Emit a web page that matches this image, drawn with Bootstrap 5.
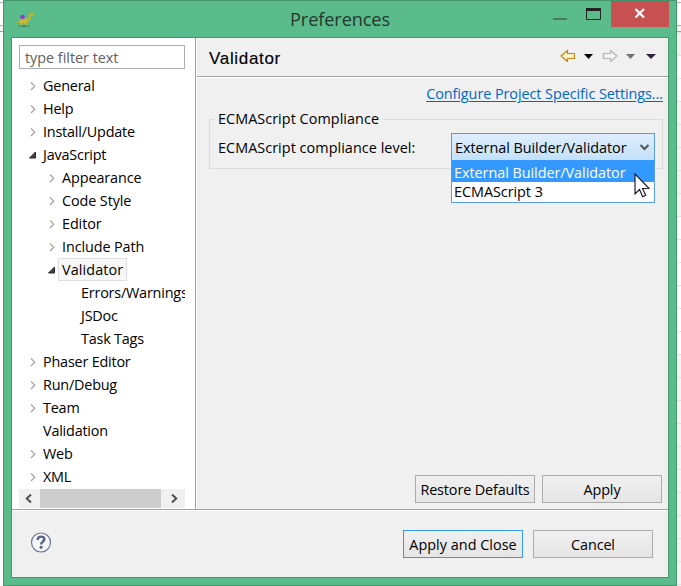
<!DOCTYPE html>
<html lang="en">
<head>
<meta charset="utf-8">
<title>Preferences</title>
<link rel="stylesheet" href="https://cdn.jsdelivr.net/npm/bootstrap@5.3.0/dist/css/bootstrap.min.css">
<style>
body{width:681px;height:586px;overflow:hidden;padding:0 4px 0 3px;color:#000;
 font:14.4px/23px "Open Sans","Noto Sans",sans-serif;letter-spacing:-.2px;
 background:linear-gradient(#fff 2px,#b0b0b4 2px 3px,#fff 3px 25px,#b0b0b4 25px 26px,#f4f4f4 26px 31px,#a0a0a0 31px 32px,transparent 32px),
 linear-gradient(#fff,#fff) 0 0/3px 100% no-repeat,
 repeating-linear-gradient(transparent 0 9px,#dfdfdf 9px 10px,transparent 10px 23px),
 linear-gradient(#f2f2f2 55px,#fff 55px 101px,#f5f5f5 101px 216px,#fff 216px 354px,#f5f5f5 354px)}
svg{display:block;flex:none}
.dialog-window{height:586px;background:#5bbc8b;border:1px solid #45966d;padding:0 7px 7px}
.titlebar{height:36px}
.app-icon{margin:9px 0 0 2px;width:22px}
.win-title{font-size:18.2px;line-height:36px;letter-spacing:-.12px;color:#23382e;padding-left:255px}
.win-close{width:58px;height:26px;background:#c75050;margin-right:0}
.client{height:541px;background:#f0f0f0;border:1px solid #45966d}
.upper{height:472px;border-bottom:1px solid #a0a0a0}
.sidebar{width:184px;background:#fff;border-right:1px solid #a0a0a0;padding:7px 10px 0 7px}
.filter-box{width:166px;height:24px;border:1px solid #abadb3;padding:0 5px;color:#606060;line-height:24px;letter-spacing:-.02px;margin-bottom:5px}
.tree{height:415px;width:166px;overflow:hidden}
.node{height:23px;padding-left:9px;white-space:nowrap}
.lvl1{padding-left:28px}.lvl2{padding-left:47px}
.twisty{width:11px;height:23px;flex:none}
.node-label{padding:0 3px;height:23px;line-height:21px;border:1px solid transparent}
.lvl1 .node-label{letter-spacing:-.1px}
.picked{background:#f7f7f7;border-color:#dedede}
.lvl1 .picked{letter-spacing:.1px}
.scroller{width:166px;height:19px;background:#f0f0f0}
.thumb{width:121px;background:#cdcdcd}
.page{border-left:1px solid #fff;min-width:0}
.page-head{height:39px;border-bottom:1px solid #a0a0a0;box-shadow:0 1px #fff;padding-left:12px}
.page-title{font:17px/38px "Liberation Sans",sans-serif;letter-spacing:.68px;-webkit-text-stroke:.15px #000;padding-top:2px;height:38px}
.settings-link{color:#06c;text-decoration:underline;text-underline-offset:2px;line-height:23px;letter-spacing:-.06px;margin:5px 5px 0 0}
.settings-group{margin:4px 5px 0 12px;height:60px;border:1px solid #dcdcdc;padding:0 7px 0 8px;letter-spacing:.05px}
.settings-group legend{float:none;width:auto;font-size:inherit;line-height:20px;margin:0 0 0 -3px;padding:0 3px;background:#f0f0f0}
.level-label{padding-top:7px}
.combo{width:204px;height:28px;border:1px solid #569de5;background:linear-gradient(#dfeefc,#c4e0fa);padding:0 4px 0 3px;position:relative;margin-top:4px;letter-spacing:-.04px}
.combo-list{position:absolute;left:-1px;top:26px;width:204px;height:43px;background:#fff;border:1px solid #569de5;border-top-width:2px;border-top-color:#39f;line-height:20px;z-index:2}
.combo-list div{padding-left:2px;height:20px}
.combo-list .hot{background:#39f;color:#fff;height:20px;line-height:22px}
.pointer{position:absolute;left:182px;top:11px}
.btn.dlg{width:120px;height:28px;padding:0;border:1px solid #acacac;border-radius:0;background:linear-gradient(#f0f0f0,#e5e5e5);color:#000;font-size:inherit;line-height:27px;letter-spacing:-.12px}
.btn.dlg.main{border-color:#39f;letter-spacing:.03px}
.footer-bar{height:67px;border-top:1px solid #fff;padding:0 15px 0 18px}
.page-actions{gap:7px;padding:0 6px 6px 0}
.bottom-actions{gap:10px}
</style>
<script src="https://cdn.jsdelivr.net/npm/bootstrap@5.3.0/dist/js/bootstrap.bundle.min.js"></script>
</head>
<body>
<svg width="0" height="0" class="position-absolute"><defs>
<symbol id="closed" viewBox="0 0 11 23"><path d="M3 8.500l3.700 3.700L3 16" fill="none" stroke="#a0a0a0" stroke-width="1.200"/></symbol>
<symbol id="open" viewBox="0 0 11 23"><path d="M7.500 9v6h-6z" fill="#404040" stroke="#262626"/></symbol>
</defs></svg>
<div class="dialog-window">
 <div class="titlebar d-flex align-items-start">
  <svg class="app-icon" width="22" height="18" viewBox="0 0 22 18"><ellipse cx="11" cy="16" rx="6" ry="1" fill="#3f9068"/><path d="M2.500 8v3l3 1.500 1.500-3 3-2 4 1.500 2-1.500V3.800l2-1.300 3 1v2.200l-3-.5-.5 4-3 3.500v2.600h-2v-2H9v2H7v-2.500C3.500 13.500 1.500 11 2.500 8z" fill="#c6b62f" stroke="#a5ad35" stroke-width=".5"/><path d="M7 12h6" stroke="#d9c640"/><circle cx="9.500" cy="7" r="2.300" fill="#8740cf"/></svg>
  <div class="win-title">Preferences</div>
  <div class="ms-auto d-flex">
   <svg width="59" height="26" viewBox="0 0 59 26"><path d="M1 17h14v2H1z" fill="#47795f"/><path d="M34.500 8v10.500h14V8z" fill="none" stroke="#222"/><path d="M34 7h15v3H34z" fill="#222"/></svg>
   <div class="win-close d-flex justify-content-center"><svg width="12" height="26" viewBox="0 0 12 26"><path d="M1.500 8l8.500 8.500M10 8l-8.500 8.500" stroke="#fff" stroke-width="2.200"/></svg></div>
  </div>
 </div>
 <div class="client d-flex flex-column">
  <div class="upper d-flex">
   <aside class="sidebar flex-shrink-0">
    <div class="filter-box">type filter text</div>
    <div class="tree">
     <div class="node d-flex"><svg class="twisty"><use href="#closed"/></svg><div class="node-label">General</div></div>
     <div class="node d-flex"><svg class="twisty"><use href="#closed"/></svg><div class="node-label">Help</div></div>
     <div class="node d-flex"><svg class="twisty"><use href="#closed"/></svg><div class="node-label">Install/Update</div></div>
     <div class="node d-flex"><svg class="twisty"><use href="#open"/></svg><div class="node-label">JavaScript</div></div>
     <div class="node lvl1 d-flex"><svg class="twisty"><use href="#closed"/></svg><div class="node-label">Appearance</div></div>
     <div class="node lvl1 d-flex"><svg class="twisty"><use href="#closed"/></svg><div class="node-label">Code Style</div></div>
     <div class="node lvl1 d-flex"><svg class="twisty"><use href="#closed"/></svg><div class="node-label">Editor</div></div>
     <div class="node lvl1 d-flex"><svg class="twisty"><use href="#closed"/></svg><div class="node-label">Include Path</div></div>
     <div class="node lvl1 d-flex"><svg class="twisty"><use href="#open"/></svg><div class="node-label picked">Validator</div></div>
     <div class="node lvl2 d-flex"><div class="twisty"></div><div class="node-label">Errors/Warnings</div></div>
     <div class="node lvl2 d-flex"><div class="twisty"></div><div class="node-label">JSDoc</div></div>
     <div class="node lvl2 d-flex"><div class="twisty"></div><div class="node-label">Task Tags</div></div>
     <div class="node d-flex"><svg class="twisty"><use href="#closed"/></svg><div class="node-label">Phaser Editor</div></div>
     <div class="node d-flex"><svg class="twisty"><use href="#closed"/></svg><div class="node-label">Run/Debug</div></div>
     <div class="node d-flex"><svg class="twisty"><use href="#closed"/></svg><div class="node-label">Team</div></div>
     <div class="node d-flex"><div class="twisty"></div><div class="node-label">Validation</div></div>
     <div class="node d-flex"><svg class="twisty"><use href="#closed"/></svg><div class="node-label">Web</div></div>
     <div class="node d-flex"><svg class="twisty"><use href="#closed"/></svg><div class="node-label">XML</div></div>
    </div>
    <div class="scroller d-flex">
     <svg width="21" height="19"><path d="M12 5.500l-4.200 4 4.200 4" fill="none" stroke="#505050" stroke-width="2"/></svg>
     <div class="thumb"></div>
     <svg width="24" height="19"><path d="M11 5.500l4.200 4-4.200 4" fill="none" stroke="#505050" stroke-width="2"/></svg>
    </div>
   </aside>
   <main class="page flex-grow-1 d-flex flex-column">
    <div class="page-head d-flex justify-content-between">
     <div class="page-title">Validator</div>
     <svg class="me-1" width="104" height="38" viewBox="0 0 104 38">
      <path d="M1 18l6.500-5.500v3H14.500v5H7.500v3z" fill="#fff2c2" stroke="#bd851c" stroke-width="1.200" stroke-linejoin="round"/>
      <path d="M24 16h9l-4.500 5z" fill="#000"/>
      <path d="M57 18l-6.500-5.500v3H43.500v5h7v3z" fill="#f4f4f4" stroke="#b4b4b4" stroke-width="1.200" stroke-linejoin="round"/>
      <path d="M66 16h9l-4.500 5z" fill="#707070"/><path d="M86 16h10l-5 5z" fill="#302040"/>
     </svg>
    </div>
    <a class="settings-link align-self-end" href="#">Configure Project Specific Settings...</a>
    <fieldset class="settings-group">
     <legend>ECMAScript Compliance</legend>
     <div class="d-flex justify-content-between">
      <span class="level-label">ECMAScript compliance level:</span>
      <div class="combo d-flex align-items-center justify-content-between">
       <span>External Builder/Validator</span>
       <svg width="11" height="9"><path d="M1.500 2l4 4 4-4" fill="none" stroke="#555" stroke-width="2"/></svg>
       <div class="combo-list"><div class="hot">External Builder/Validator</div><div>ECMAScript 3</div>
        <svg class="pointer" width="17" height="25" viewBox="0 0 17 25"><path d="M1 1v20l4.500-4.500 3.200 7.200 3-1.400-3.200-6.800 6.500-.2z" fill="#fff" stroke="#101020" stroke-width="1.100"/></svg>
       </div>
      </div>
     </div>
    </fieldset>
    <div class="mt-auto d-flex justify-content-end page-actions">
     <button class="btn dlg">Restore Defaults</button><button class="btn dlg">Apply</button>
    </div>
   </main>
  </div>
  <div class="footer-bar d-flex align-items-center">
   <svg class="mb-1" width="22" height="22" viewBox="0 0 22 22"><circle cx="11" cy="11.500" r="9.500" fill="#f5f7fa" stroke="#6b7892" stroke-width="1.200"/><path d="M7.700 9.100c0-4.600 6.700-4.300 6.700-.8 0 2.400-3.300 2.300-3.300 5.200" fill="none" stroke="#526086" stroke-width="2.400"/><circle cx="11.100" cy="16.300" r="1.500" fill="#526086"/></svg>
   <div class="ms-auto d-flex bottom-actions"><button class="btn dlg main">Apply and Close</button><button class="btn dlg">Cancel</button></div>
  </div>
 </div>
</div>
</body>
</html>
